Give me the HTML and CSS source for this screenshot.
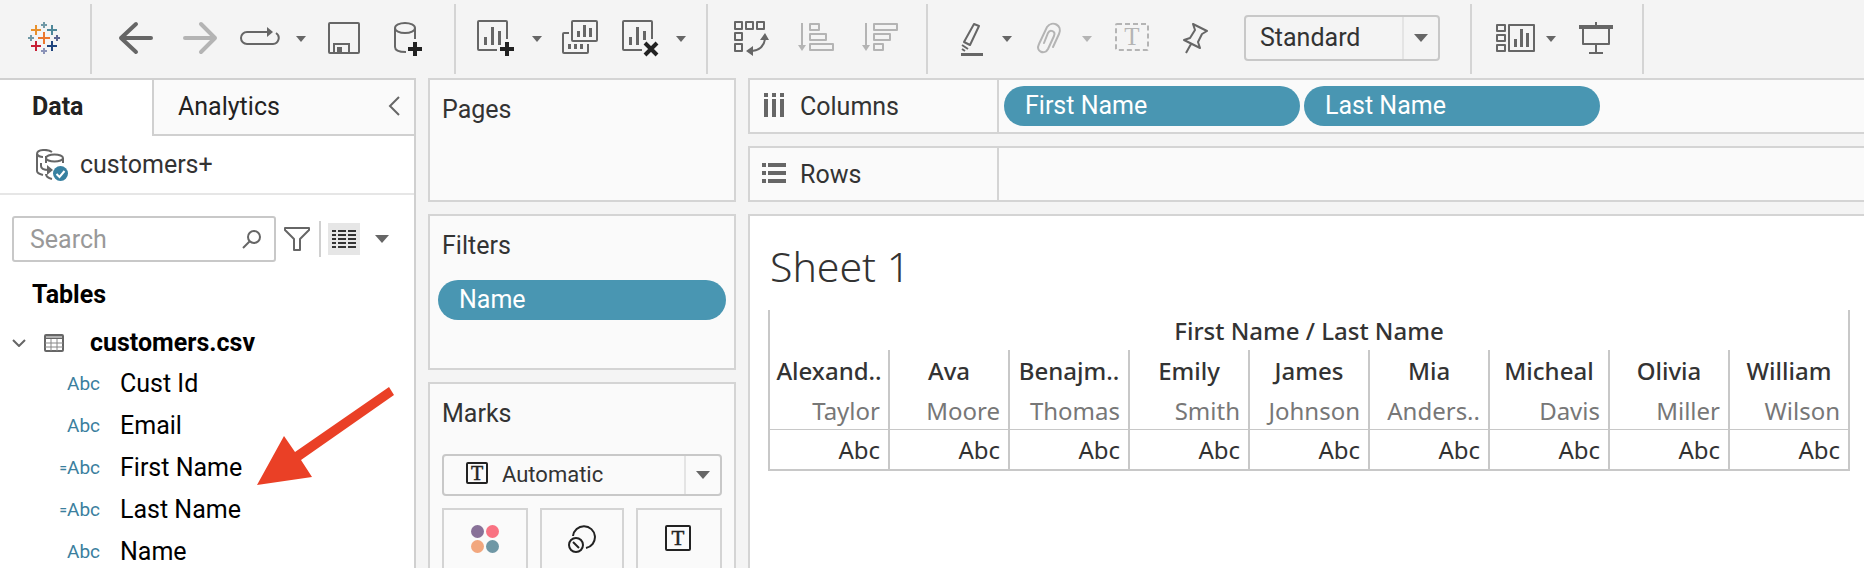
FILE: index.html
```html
<!DOCTYPE html>
<html lang="en">
<head>
<meta charset="utf-8">
<title>Sheet 1</title>
<link rel="stylesheet" href="styles.css">
</head>
<body>
<header class="toolbar">
  <div class="group group-logo">
    <svg class="logo" viewBox="28 22 32 32" aria-label="Home">
      <path stroke="#eb762c" stroke-width="2" d="M38 38h12M44 32v12"/>
      <path stroke="#e8912d" stroke-width="2" d="M31 30h10M36 25v10"/>
      <path stroke="#4e8799" stroke-width="2" d="M47 30h10M52 25v10"/>
      <path stroke="#c72035" stroke-width="2" d="M31 46h10M36 41v10"/>
      <path stroke="#1f447e" stroke-width="2" d="M47 46h10M52 41v10"/>
      <path stroke="#7199a6" stroke-width="2" d="M41 25h6M44 22v6M28 38h6M31 35v6"/>
      <path stroke="#5b6591" stroke-width="2" d="M54 38h6M57 35v6"/>
      <path stroke="#8b93b8" stroke-width="2" d="M41 51h6M44 48v6"/>
    </svg>
  </div>
  <div class="group group-history">
    <button class="tool w64" aria-label="Undo"><svg viewBox="104 12 64 52"><path class="ln thick" d="M151 38H121M136 24L121 38L136 52"/></svg></button>
    <button class="tool w64" aria-label="Redo" disabled><svg viewBox="168 12 64 52"><path class="ln thick" d="M185 38H215M201 24L215 38L201 52"/></svg></button>
    <button class="tool w56" aria-label="Replay"><svg viewBox="232 12 56 52"><path class="ln" d="M268 32H247a6 6 0 0 0 0 12H273a6 6 0 0 0 3-11"/><path class="fl" d="M267 27l6 5-6 5z"/></svg></button>
    <button class="tool w24" aria-label="Replay options"><svg viewBox="288 12 24 52"><path class="fl" d="M296 36h10l-5 6z"/></svg></button>
    <button class="tool w64" aria-label="Save"><svg viewBox="312 12 64 52"><rect class="ln" x="329" y="23" width="30" height="30" rx="1"/><path class="ln" d="M334 53V44H349V53"/><path class="fl" d="M337 47h5v5h-5z"/></svg></button>
    <button class="tool w64" aria-label="New data source"><svg viewBox="376 12 64 52"><ellipse class="ln" cx="405" cy="28" rx="10" ry="5"/><path class="ln" d="M395 28V47C395 51 400 52 406 52M415 28V39"/><path class="plus" d="M408 49h14M415 42v14"/></svg></button>
  </div>
  <div class="group group-sheets">
    <button class="tool w60" aria-label="New worksheet"><svg viewBox="466 12 60 52"><path class="ln" d="M497 50H479a1 1 0 0 1-1-1V22a1 1 0 0 1 1-1H506a1 1 0 0 1 1 1V39"/><path class="fl" d="M484 37h3v8h-3zM491 27h3v18h-3zM498 31h3v14h-3z"/><path class="plus" d="M500 49h14M507 42v14"/></svg></button>
    <button class="tool w24" aria-label="New worksheet options"><svg viewBox="526 12 24 52"><path class="fl" d="M532 36h10l-5 6z"/></svg></button>
    <button class="tool w60" aria-label="Duplicate"><svg viewBox="550 12 60 52"><rect class="ln" x="572" y="21" width="25" height="20" rx="1"/><path class="ln" d="M569 33H564a1 1 0 0 0-1 1V52a1 1 0 0 0 1 1H587a1 1 0 0 0 1-1V44"/><path class="fl" d="M577 31h3v6h-3zM583 25h3v12h-3zM589 28h3v9h-3zM568 44h3v5h-3zM574 44h3v5h-3zM580 44h3v5h-3z"/></svg></button>
    <button class="tool w60" aria-label="Clear sheet"><svg viewBox="610 12 60 52"><path class="ln" d="M642 50H624a1 1 0 0 1-1-1V22a1 1 0 0 1 1-1H651a1 1 0 0 1 1 1V39"/><path class="fl" d="M629 37h3v8h-3zM636 27h3v18h-3zM643 31h3v9h-3z"/><path class="plus" d="M645 43l12 12M657 43l-12 12"/></svg></button>
    <button class="tool w24" aria-label="Clear options"><svg viewBox="670 12 24 52"><path class="fl" d="M676 36h10l-5 6z"/></svg></button>
  </div>
  <div class="group group-sort">
    <button class="tool w64" aria-label="Swap rows and columns"><svg viewBox="720 12 64 52"><path class="ln" stroke-linejoin="round" d="M735 22h7v7h-7zM746 22h7v7h-7zM757 22h7v7h-7zM735 33h7v7h-7zM735 44h7v7h-7zM765 39C764 46 760 50 752 51"/><path class="fl" d="M765 33l4 7h-9zM746 51l7-5v10z"/></svg></button>
    <button class="tool w64" aria-label="Sort ascending" disabled><svg viewBox="784 12 64 52"><path class="ln" stroke-linejoin="round" d="M802 23V46M810 24h9v6h-9zM810 34h16v6h-16zM810 44h23v6h-23z"/><path class="fl" d="M798 45h8l-4 6z"/></svg></button>
    <button class="tool w64" aria-label="Sort descending" disabled><svg viewBox="848 12 64 52"><path class="ln" stroke-linejoin="round" d="M866 23V46M874 24h23v6h-23zM874 34h16v6h-16zM874 44h9v6h-9z"/><path class="fl" d="M862 45h8l-4 6z"/></svg></button>
  </div>
  <div class="group group-format">
    <button class="tool w56" aria-label="Highlight"><svg viewBox="944 12 56 52"><path class="ln" stroke-linejoin="round" d="M974 24L979 26L970 45L964 42ZM962 45L968 49M962 49L965 51"/><path class="fl" d="M961 53h22v3h-22z"/></svg></button>
    <button class="tool w24" aria-label="Highlight options"><svg viewBox="1000 12 24 52"><path class="fl" d="M1002 36h10l-5 6z"/></svg></button>
    <button class="tool w48" aria-label="Group members" disabled><svg viewBox="1024 12 48 52"><path class="ln" stroke-linecap="round" d="M1053 47L1059 34C1063 25 1052 20 1047 27L1039 44C1035 52 1045 55 1048 49L1054 36C1056 31 1050 29 1048 33L1044 43"/></svg></button>
    <button class="tool w24" aria-label="Group options" disabled><svg viewBox="1072 12 24 52"><path class="fl" d="M1082 36h10l-5 6z"/></svg></button>
    <button class="tool w72" aria-label="Show mark labels" disabled><svg viewBox="1096 12 72 52"><rect class="ln" x="1116" y="24" width="32" height="26" rx="1" stroke-dasharray="5 3"/><text class="fl serif" x="1132" y="45" font-size="25" text-anchor="middle">T</text></svg></button>
    <button class="tool w56" aria-label="Pin"><svg viewBox="1168 12 56 52"><path class="ln" stroke-linejoin="round" d="M1193 24L1207 31L1202 34L1198 42L1200 48L1184 40L1190 38L1195 30ZM1191 44L1186 53"/></svg></button>
    <div class="combo combo-fit">
      <select aria-label="Fit"><option>Standard</option></select>
      <svg class="combo-arrow" viewBox="0 0 14 8"><path class="fl" d="M0 0h14l-7 8z"/></svg>
    </div>
  </div>
  <div class="group group-show">
    <button class="tool w52" aria-label="Show cards"><svg viewBox="1488 12 52 52"><path class="ln" stroke-linejoin="round" d="M1497 25h8v6h-8zM1497 35h8v6h-8zM1497 45h8v6h-8zM1509 25h25v26h-25z"/><path class="fl" d="M1514 39h3v8h-3zM1520 29h3v18h-3zM1526 33h3v14h-3z"/></svg></button>
    <button class="tool w24" aria-label="Card options"><svg viewBox="1540 12 24 52"><path class="fl" d="M1546 36h10l-5 6z"/></svg></button>
    <button class="tool w64" aria-label="Presentation mode"><svg viewBox="1564 12 64 52"><path class="fl" d="M1579 25h34v4h-34zM1595 22h2v3h-2z"/><path class="ln" stroke-linejoin="round" d="M1583 28V44H1609V28M1596 44V53M1589 53H1603"/></svg></button>
  </div>
</header>

<main class="workspace">
  <aside class="data-pane">
    <div class="tabs">
      <button class="tab tab-active">Data</button>
      <div class="tab-rest">
        <button class="tab">Analytics</button>
        <button class="collapse" aria-label="Collapse pane"><svg viewBox="0 0 12 20"><path class="ln" d="M11 1L2 10L11 19"/></svg></button>
      </div>
    </div>
    <div class="source">
      <svg class="source-icon" viewBox="36 148 32 32">
        <path class="ln" d="M52 151C48 148 37 148 37 153V170C37 172 39 173 43 174M37 153C38 155 40 156 43 156M41 162V165C41 168 44 169 49 169M46 155V162M46 173C46 176 48 177 52 178M63 157V162"/>
        <ellipse class="ln" cx="54.500" cy="157" rx="8.500" ry="3.500"/>
        <path class="fl" d="M47 164l6 5-6 5z"/>
        <circle cx="60.500" cy="172.500" r="7.500" fill="#3780a0"/>
        <path d="M56.500 173l3 3 5-6" fill="none" stroke="#fff" stroke-width="2"/>
      </svg>
      <span>customers+</span>
    </div>
    <div class="search-row">
      <label class="search">
        <input type="text" placeholder="Search" aria-label="Search">
        <svg class="search-icon" viewBox="0 0 20 20"><circle class="ln" cx="12" cy="8" r="6"/><path class="ln" d="M8 12L1 19"/></svg>
      </label>
      <button class="plain" aria-label="Filter fields"><svg class="funnel" viewBox="0 0 26 26"><path class="ln" stroke-linejoin="round" d="M1 2H25V4L16 13V24H10V13L1 4Z"/></svg></button>
      <span class="rule"></span>
      <button class="plain view-list" aria-label="View as list"><svg viewBox="0 0 24 18"><path d="M0 1H24M0 5H24M0 9H24M0 13H24M0 17H24" stroke="#333" stroke-width="2" stroke-dasharray="4 2 8 2 8 0"/></svg></button>
      <button class="plain" aria-label="View options"><svg class="view-caret" viewBox="0 0 14 8"><path class="fl" d="M0 0h14l-7 8z"/></svg></button>
    </div>
    <h2 class="tables-title">Tables</h2>
    <div class="table-name">
      <svg class="twisty" viewBox="0 0 14 8"><path class="ln" d="M1 1L7 7L13 1"/></svg>
      <svg class="grid-icon" viewBox="0 0 20 18"><path class="fl" d="M1 1h18v4h-18z"/><path d="M2 3H18" stroke="#fff"/><rect class="ln" x="1" y="1" width="18" height="16" rx="1"/><path d="M1 9H19M1 13H19M7 5V17M13 5V17" stroke="#888"/></svg>
      <span>customers.csv</span>
    </div>
    <ul class="fields">
      <li><span class="type">Abc</span>Cust Id</li>
      <li><span class="type">Abc</span>Email</li>
      <li><span class="type"><b>=</b>Abc</span>First Name</li>
      <li><span class="type"><b>=</b>Abc</span>Last Name</li>
      <li><span class="type">Abc</span>Name</li>
    </ul>
    <svg class="pointer" viewBox="257 387 138 99"><path fill="#ea4026" d="M389 387L394 395L301 460L312 477L257 485L284 436L295 452Z"/></svg>
  </aside>

  <section class="cards">
    <div class="card card-pages"><h2>Pages</h2></div>
    <div class="card card-filters"><h2>Filters</h2><button class="pill">Name</button></div>
    <div class="card card-marks">
      <h2>Marks</h2>
      <div class="combo combo-mark">
        <select aria-label="Mark type"><option>Automatic</option></select>
        <svg class="mark-icon" viewBox="0 0 22 22"><rect class="dk" x="1" y="1" width="20" height="20" rx="1"/><text class="serif" x="11" y="18" font-size="20" text-anchor="middle" fill="#222" stroke="#222" stroke-width=".5">T</text></svg>
        <svg class="combo-arrow" viewBox="0 0 14 8"><path class="fl" d="M0 0h14l-7 8z"/></svg>
      </div>
      <div class="mark-buttons">
        <button aria-label="Color"><svg viewBox="0 0 28 28"><circle cx="6.500" cy="6.500" r="6.500" fill="#887198"/><circle cx="21.500" cy="6.500" r="6.500" fill="#f97282"/><circle cx="6.500" cy="21.500" r="6.500" fill="#f2a77e"/><circle cx="21.500" cy="21.500" r="6.500" fill="#6f97a5"/></svg></button>
        <button aria-label="Size"><svg viewBox="0 0 28 28"><path class="dk" d="M5 11A11 11 0 1 1 18 23"/><circle class="dk" cx="8" cy="20" r="7"/><path class="dk" d="M5 17L11 23"/></svg></button>
        <button aria-label="Text"><svg viewBox="0 0 28 28"><rect class="dk" x="1" y="1" width="24" height="24" rx="1"/><text class="serif" x="13" y="20" font-size="21" text-anchor="middle" fill="#222" stroke="#222" stroke-width=".5">T</text></svg></button>
      </div>
    </div>
  </section>

  <section class="view">
    <div class="shelf">
      <div class="shelf-label">
        <svg viewBox="0 0 24 24"><path class="fl" d="M2 0h4v4h-4zM10 0h4v4h-4zM18 0h4v4h-4zM2 6h4v18h-4zM10 6h4v18h-4zM18 6h4v18h-4z"/></svg>
        <span>Columns</span>
      </div>
      <div class="shelf-items"><button class="pill">First Name</button><button class="pill">Last Name</button></div>
    </div>
    <div class="shelf">
      <div class="shelf-label">
        <svg viewBox="0 0 24 24"><path class="fl" d="M0 2h4v4h-4zM0 10h4v4h-4zM0 18h4v4h-4zM6 2h18v4h-18zM6 10h18v4h-18zM6 18h18v4h-18z"/></svg>
        <span>Rows</span>
      </div>
      <div class="shelf-items"></div>
    </div>
    <div class="sheet">
      <h1>Sheet 1</h1>
      <table>
        <thead>
          <tr class="title"><th colspan="9">First Name / Last Name</th></tr>
          <tr class="first"><th>Alexand..</th><th>Ava</th><th>Benajm..</th><th>Emily</th><th>James</th><th>Mia</th><th>Micheal</th><th>Olivia</th><th>William</th></tr>
          <tr class="last"><th>Taylor</th><th>Moore</th><th>Thomas</th><th>Smith</th><th>Johnson</th><th>Anders..</th><th>Davis</th><th>Miller</th><th>Wilson</th></tr>
        </thead>
        <tbody>
          <tr><td>Abc</td><td>Abc</td><td>Abc</td><td>Abc</td><td>Abc</td><td>Abc</td><td>Abc</td><td>Abc</td><td>Abc</td></tr>
        </tbody>
      </table>
    </div>
  </section>
</main>
</body>
</html>
```
FILE: styles.css
```css
* { box-sizing: border-box; }

body {
  margin: 0;
  height: 100vh;
  display: flex;
  flex-direction: column;
  overflow: hidden;
  background: #f4f4f4;
  color: #333;
  font: 400 25px/36px Roboto, "Noto Sans", sans-serif;
}

button, select, input { font: inherit; color: inherit; margin: 0; }
button { padding: 0; border: 0; background: none; }
h1, h2 { margin: 0; font: inherit; }
svg { display: block; flex: none; }

.ln { fill: none; stroke: #666; stroke-width: 2; }
.fl { fill: #666; }
.dk { fill: none; stroke: #222; stroke-width: 2; }
.thick { stroke-width: 4; stroke-linecap: round; stroke-linejoin: round; }
.plus { fill: none; stroke: #222; stroke-width: 4; }
.serif { font-family: "Liberation Serif", serif; }
:disabled .ln { stroke: #b4b4b4; }
:disabled .fl { fill: #b4b4b4; }

/* Toolbar */
.toolbar { display: flex; flex: none; padding: 4px 0; }
.group { display: flex; align-items: center; height: 70px; border-right: 2px solid #d4d4d4; }
.group-logo { padding: 0 30px 2px 28px; }
.group-history { padding: 0 14px 2px 12px; }
.group-sheets { padding: 0 12px 2px 10px; }
.group-sort { padding: 0 14px 2px 12px; }
.group-format { padding: 0 30px 2px 16px; }
.group-show { padding: 0 14px 2px 16px; }
.logo { width: 32px; height: 32px; }
.tool { height: 52px; }
.tool svg { width: 100%; height: 100%; }
.w24 { width: 24px; }
.w48 { width: 48px; }
.w52 { width: 52px; }
.w56 { width: 56px; }
.w60 { width: 60px; }
.w64 { width: 64px; }
.w72 { width: 72px; }

.combo { display: grid; align-items: center; }
.combo > * { grid-area: 1 / 1; }
.combo select {
  appearance: none;
  width: 100%;
  height: 100%;
  border: 2px solid #c8c8c8;
  border-radius: 4px;
  background: linear-gradient(#e4e4e4, #e4e4e4) right 34px top / 2px 100% no-repeat;
}
.combo-arrow { width: 14px; height: 8px; justify-self: end; margin-right: 12px; pointer-events: none; }
.combo-fit { width: 196px; height: 46px; margin-left: 20px; }
.combo-fit select { padding: 0 14px; }

/* Workspace */
.workspace {
  flex: 1;
  min-height: 0;
  display: grid;
  grid-template: minmax(0, 1fr) / 416px 308px 1fr;
  gap: 12px;
}

/* Data pane */
.data-pane {
  position: relative;
  overflow: hidden;
  border: solid #d0d0d0;
  border-width: 2px 2px 0 0;
  background: #fff;
  color: #000;
}
.tabs { display: flex; height: 56px; color: #222; }
.tab-active { width: 152px; padding: 0 0 2px 32px; text-align: left; font-weight: 700; }
.tab-rest {
  flex: 1;
  display: flex;
  align-items: center;
  justify-content: space-between;
  padding: 0 14px 0 24px;
  border: solid #d0d0d0;
  border-width: 0 0 2px 2px;
  background: #fafafa;
}
.collapse { padding-bottom: 2px; }
.collapse svg { width: 12px; height: 20px; }
.source {
  display: flex;
  align-items: center;
  gap: 12px;
  height: 59px;
  padding-left: 36px;
  border-bottom: 2px solid #e6e6e6;
  color: #333;
}
.source-icon { width: 32px; height: 32px; }
.search-row { display: flex; align-items: center; padding: 21px 25px 0 12px; }
.search { display: grid; align-items: center; flex: 1; margin-right: 8px; }
.search > * { grid-area: 1 / 1; }
.search input {
  width: 100%;
  height: 46px;
  padding: 0 40px 0 16px;
  border: 2px solid #c8c8c8;
  border-radius: 3px;
  background: #fff;
}
.search input::placeholder { color: #999; opacity: 1; }
.search-icon { width: 20px; height: 20px; justify-self: end; margin-right: 14px; }
.funnel { width: 26px; height: 26px; }
.rule { width: 2px; height: 36px; margin: 0 7px 0 9px; background: #d0d0d0; }
.view-list { display: grid; place-items: center; width: 32px; height: 32px; margin-right: 15px; background: #e6e6e6; }
.view-list svg { width: 24px; height: 18px; }
.view-caret { width: 14px; height: 8px; }
.tables-title { padding: 15px 0 0 32px; font-weight: 700; }
.table-name { display: flex; align-items: center; height: 50px; padding: 10px 0 0 12px; font-weight: 700; }
.twisty { width: 14px; height: 8px; margin-right: 18px; }
.grid-icon { width: 20px; height: 18px; margin-right: 26px; }
.fields { margin: 0; padding: 0; list-style: none; }
.fields li { display: flex; height: 42px; align-items: center; }
.type { display: flex; justify-content: flex-end; width: 100px; margin-right: 20px; font-size: 19px; color: #3b7f9e; }
.type b { font-size: 13px; }
.pointer { position: absolute; left: 257px; top: 307px; width: 138px; height: 99px; }

/* Cards */
.cards { display: flex; flex-direction: column; gap: 12px; overflow: hidden; }
.card { flex: none; border: 2px solid #d4d4d4; background: #fafafa; padding: 12px 8px; }
.card h2 { padding-left: 4px; }
.card-pages { height: 124px; }
.card-filters { height: 156px; }
.pill {
  height: 40px;
  padding: 0 21px;
  border-radius: 20px;
  background: #4996b2;
  color: #fff;
  text-align: left;
}
.card .pill { width: 100%; margin-top: 16px; }
.card-marks { flex: 1; min-height: 0; padding: 12px 12px 0; border-bottom: 0; overflow: hidden; }
.card-marks h2 { padding-left: 0; }
.combo-mark { height: 42px; margin-top: 22px; font-size: 22px; }
.combo-mark select { padding: 0 0 0 58px; }
.mark-icon { width: 22px; height: 22px; margin: 0 0 4px 24px; pointer-events: none; }
.mark-buttons { display: grid; grid-template-columns: 86px 84px 86px; gap: 12px; margin-top: 12px; }
.mark-buttons button { height: 60px; padding: 14px 0; border: 2px solid #d4d4d4; border-bottom: 0; }
.mark-buttons svg { width: 28px; height: 28px; margin: 0 auto; }

/* Shelves and view */
.view { display: flex; flex-direction: column; gap: 12px; min-width: 0; }
.shelf { display: flex; flex: none; height: 56px; border: solid #d4d4d4; border-width: 2px 0 2px 2px; background: #fafafa; }
.shelf-label { display: flex; align-items: center; gap: 14px; width: 249px; padding-left: 12px; border-right: 2px solid #d4d4d4; }
.shelf-label svg { width: 24px; height: 24px; margin-bottom: 2px; }
.shelf-label span { padding-top: 2px; }
.shelf-items { display: flex; align-items: center; gap: 4px; padding-left: 5px; }
.shelf-items .pill { width: 296px; }
.sheet { flex: 1; padding: 24px 14px 0 18px; border: solid #d4d4d4; border-width: 2px 0 0 2px; background: #fff; }
.sheet h1 { padding-left: 2px; font: 300 41px/52px "Noto Sans", sans-serif; }

table {
  width: 100%;
  margin-top: 18px;
  table-layout: fixed;
  border-collapse: separate;
  border-spacing: 0;
  border-right: 2px solid #c8c8c8;
  font: 400 24px/36px "Noto Sans", sans-serif;
}
th, td { height: 40px; padding: 2px 0 0; border-left: 2px solid #c8c8c8; white-space: nowrap; }
.title th, .first th { font-weight: 500; }
.last th { font-weight: 400; color: #777; text-align: right; padding-right: 8px; border-bottom: 1px solid #c8c8c8; }
td { height: 41px; padding: 0 8px 0 0; text-align: right; border-bottom: 2px solid #c8c8c8; }
```
